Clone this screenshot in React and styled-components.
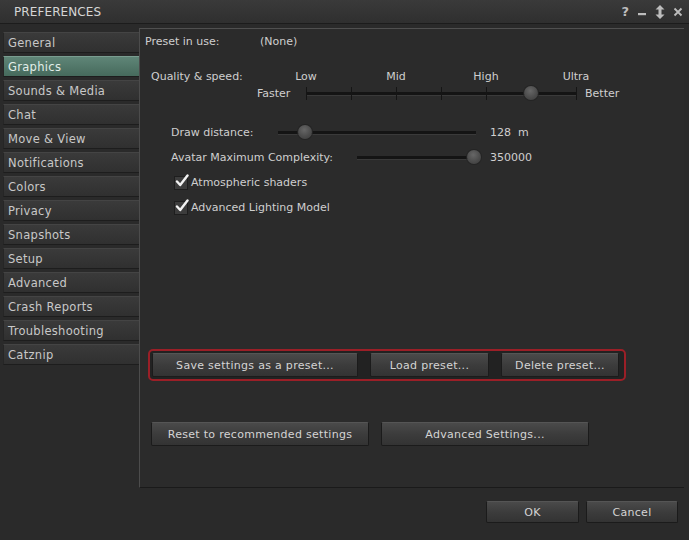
import React from 'react';
import styled, { createGlobalStyle } from 'styled-components';

const GlobalStyle = createGlobalStyle`
  html, body {
    margin: 0;
    padding: 0;
    background: #2a2a2a;
  }
  body {
    font-family: "DejaVu Sans", "Liberation Sans", sans-serif;
    font-size: 11px;
    color: #cfcfcf;
  }
`;

const Window = styled.div`
  width: 689px;
  height: 540px;
  background: #2a2a2a;
  display: flex;
  flex-direction: column;
  overflow: hidden;
`;

const TitleBar = styled.div`
  height: 23px;
  display: flex;
  align-items: center;
  justify-content: space-between;
  padding: 0 6px 0 14px;
  background: linear-gradient(180deg, #3a3a3a 0%, #2f2f2f 100%);
  border-bottom: 1px solid #1c1c1c;
`;

const Title = styled.span`
  font-size: 12px;
  color: #d6d6d6;
  letter-spacing: 0.1px;
`;

const TitleIcons = styled.div`
  display: flex;
  align-items: center;
  gap: 8px;
  color: #bdbdbd;
  font-weight: bold;
  font-size: 13px;

  svg {
    display: block;
  }
`;

const Body = styled.div`
  display: flex;
  margin-top: 4px;
  height: 460px;
`;

const Sidebar = styled.div`
  width: 136px;
  padding: 4px 0 0 3px;
  display: flex;
  flex-direction: column;
  gap: 3px;
`;

const Tab = styled.div`
  height: 21px;
  display: flex;
  align-items: center;
  padding-left: 4px;
  font-size: 11.5px;
  letter-spacing: 0.3px;
  color: ${(p) => (p.$active ? '#e2eee8' : '#c8c8c8')};
  background: ${(p) =>
    p.$active
      ? 'linear-gradient(180deg, #5f8577 0%, #466a5c 100%)'
      : 'linear-gradient(180deg, #3a3a3a 0%, #303030 100%)'};
  border-top: 1px solid ${(p) => (p.$active ? '#7a9d90' : '#444')};
  border-bottom: 1px solid #1d1d1d;
  border-left: 1px solid #262626;
  box-sizing: border-box;
`;

const Panel = styled.div`
  flex: 1;
  margin-right: 5px;
  border-left: 1px solid #4c4c4c;
  border-top: 1px solid #505050;
  border-bottom: 1px solid #1a1a1a;
  background: #2b2b2b;
  display: flex;
  flex-direction: column;
`;

const PresetRow = styled.div`
  height: 22px;
  display: flex;
  align-items: center;
  padding-left: 5px;
  margin-top: 1px;
`;

const PresetLabel = styled.span`
  width: 115px;
`;

const QualityBlock = styled.div`
  display: flex;
  padding-left: 11px;
  margin-top: 16px;
`;

const QualityLabel = styled.div`
  width: 106px;
  line-height: 17px;
`;

const QualityScale = styled.div`
  display: flex;
  flex-direction: column;
`;

const LevelLabels = styled.div`
  display: grid;
  grid-template-columns: repeat(4, 90px);
  margin-left: 4px;
  line-height: 17px;
  text-align: center;
`;

const ScaleRow = styled.div`
  display: flex;
  align-items: center;
  height: 17px;
`;

const ScaleEnd = styled.span`
  width: ${(p) => p.$w}px;
  margin-left: ${(p) => p.$ml || 0}px;
`;

const Track = styled.div`
  position: relative;
  width: ${(p) => p.$w}px;
  height: 3px;
  background: #141414;
  border-bottom: 1px solid #3a3a3a;
`;

const Tick = styled.div`
  position: absolute;
  top: -5px;
  width: 1px;
  height: 13px;
  background: #151515;
`;

const Thumb = styled.div`
  position: absolute;
  top: -6px;
  width: 14px;
  height: 14px;
  margin-left: -7px;
  border-radius: 50%;
  background: radial-gradient(circle at 45% 35%, #676767 0%, #4c4c4c 55%, #3b3b3b 100%);
  box-shadow: 0 0 0 1px #242424;
`;

const SliderRow = styled.div`
  display: flex;
  align-items: center;
  height: 25px;
  padding-left: 31px;
  margin-top: ${(p) => p.$mt || 0}px;
`;

const SliderLabel = styled.span`
  width: ${(p) => p.$w}px;
`;

const SliderValue = styled.span`
  margin-left: 14px;
  white-space: pre;
`;

const CheckRow = styled.label`
  display: flex;
  align-items: center;
  gap: 3px;
  height: 25px;
  padding-left: 34px;
`;

const Box = styled.span`
  width: 12px;
  height: 12px;
  background: #3c3c3c;
  border: 1px solid #1e1e1e;
  position: relative;

  svg {
    position: absolute;
    left: 0;
    top: -3px;
  }
`;

const PresetGroup = styled.div`
  align-self: flex-start;
  display: flex;
  gap: 12px;
  margin: 129px 0 0 8px;
  padding: 2px 5px 2px 2px;
  border: 2px solid #9b1f27;
  border-radius: 5px;
  background: #222;
`;

const Button = styled.button`
  width: ${(p) => p.$w}px;
  height: ${(p) => p.$h || 24}px;
  font-family: inherit;
  font-size: 11px;
  letter-spacing: 0.3px;
  color: #d4d4d4;
  background: linear-gradient(180deg, #4a4a4a 0%, #3c3c3c 50%, #333 100%);
  border: 1px solid #1b1b1b;
  border-top-color: #555;
  border-radius: 2px;
  padding: 0;
  cursor: pointer;
`;

const ResetRow = styled.div`
  display: flex;
  gap: 12px;
  margin: 41px 0 0 11px;
`;

const Footer = styled.div`
  display: flex;
  justify-content: flex-end;
  gap: 7px;
  padding: 13px 11px 0 0;
`;

const Check = () => (
  <svg width="14" height="14" viewBox="0 0 14 14">
    <path d="M2 7.5 L5.2 11 L12.5 1.5" fill="none" stroke="#f2f2f2" strokeWidth="2.4" strokeLinecap="round" strokeLinejoin="round" />
  </svg>
);

const tabs = [
  'General', 'Graphics', 'Sounds & Media', 'Chat', 'Move & View', 'Notifications',
  'Colors', 'Privacy', 'Snapshots', 'Setup', 'Advanced', 'Crash Reports',
  'Troubleshooting', 'Catznip',
];

export default function App() {
  return (
    <Window>
      <GlobalStyle />
      <TitleBar>
        <Title>PREFERENCES</Title>
        <TitleIcons>
          <span>?</span>
          <svg width="10" height="10" viewBox="0 0 10 10"><rect x="1" y="6" width="8" height="2.2" fill="#bdbdbd" /></svg>
          <svg width="10" height="14" viewBox="0 0 10 14">
            <path d="M5 0 L9.5 4.5 H6.5 V9.5 H9.5 L5 14 L0.5 9.5 H3.5 V4.5 H0.5 Z" fill="#bdbdbd" />
          </svg>
          <svg width="10" height="10" viewBox="0 0 10 10">
            <path d="M1.5 1.5 L8.5 8.5 M8.5 1.5 L1.5 8.5" stroke="#bdbdbd" strokeWidth="1.8" />
          </svg>
        </TitleIcons>
      </TitleBar>
      <Body>
        <Sidebar>
          {tabs.map((t) => (
            <Tab key={t} $active={t === 'Graphics'}>{t}</Tab>
          ))}
        </Sidebar>
        <Panel>
          <PresetRow>
            <PresetLabel>Preset in use:</PresetLabel>
            <span>(None)</span>
          </PresetRow>

          <QualityBlock>
            <QualityLabel>Quality &amp; speed:</QualityLabel>
            <QualityScale>
              <LevelLabels>
                <span>Low</span>
                <span>Mid</span>
                <span>High</span>
                <span>Ultra</span>
              </LevelLabels>
              <ScaleRow>
                <ScaleEnd $w={49}>Faster</ScaleEnd>
                <Track $w={271}>
                  {[0, 45, 90, 135, 180, 225, 270].map((x) => (
                    <Tick key={x} style={{ left: x }} />
                  ))}
                  <Thumb style={{ left: 225 }} />
                </Track>
                <ScaleEnd $ml={8}>Better</ScaleEnd>
              </ScaleRow>
            </QualityScale>
          </QualityBlock>

          <SliderRow $mt={18}>
            <SliderLabel $w={107}>Draw distance:</SliderLabel>
            <Track $w={198}>
              <Thumb style={{ left: 27 }} />
            </Track>
            <SliderValue>128  m</SliderValue>
          </SliderRow>
          <SliderRow>
            <SliderLabel $w={186}>Avatar Maximum Complexity:</SliderLabel>
            <Track $w={119}>
              <Thumb style={{ left: 117 }} />
            </Track>
            <SliderValue>350000</SliderValue>
          </SliderRow>

          <CheckRow>
            <Box><Check /></Box>
            Atmospheric shaders
          </CheckRow>
          <CheckRow>
            <Box><Check /></Box>
            Advanced Lighting Model
          </CheckRow>

          <PresetGroup>
            <Button $w={206}>Save settings as a preset...</Button>
            <Button $w={119}>Load preset...</Button>
            <Button $w={118}>Delete preset...</Button>
          </PresetGroup>

          <ResetRow>
            <Button $w={218}>Reset to recommended settings</Button>
            <Button $w={208}>Advanced Settings...</Button>
          </ResetRow>
        </Panel>
      </Body>
      <Footer>
        <Button $w={93} $h={22}>OK</Button>
        <Button $w={92} $h={22}>Cancel</Button>
      </Footer>
    </Window>
  );
}
